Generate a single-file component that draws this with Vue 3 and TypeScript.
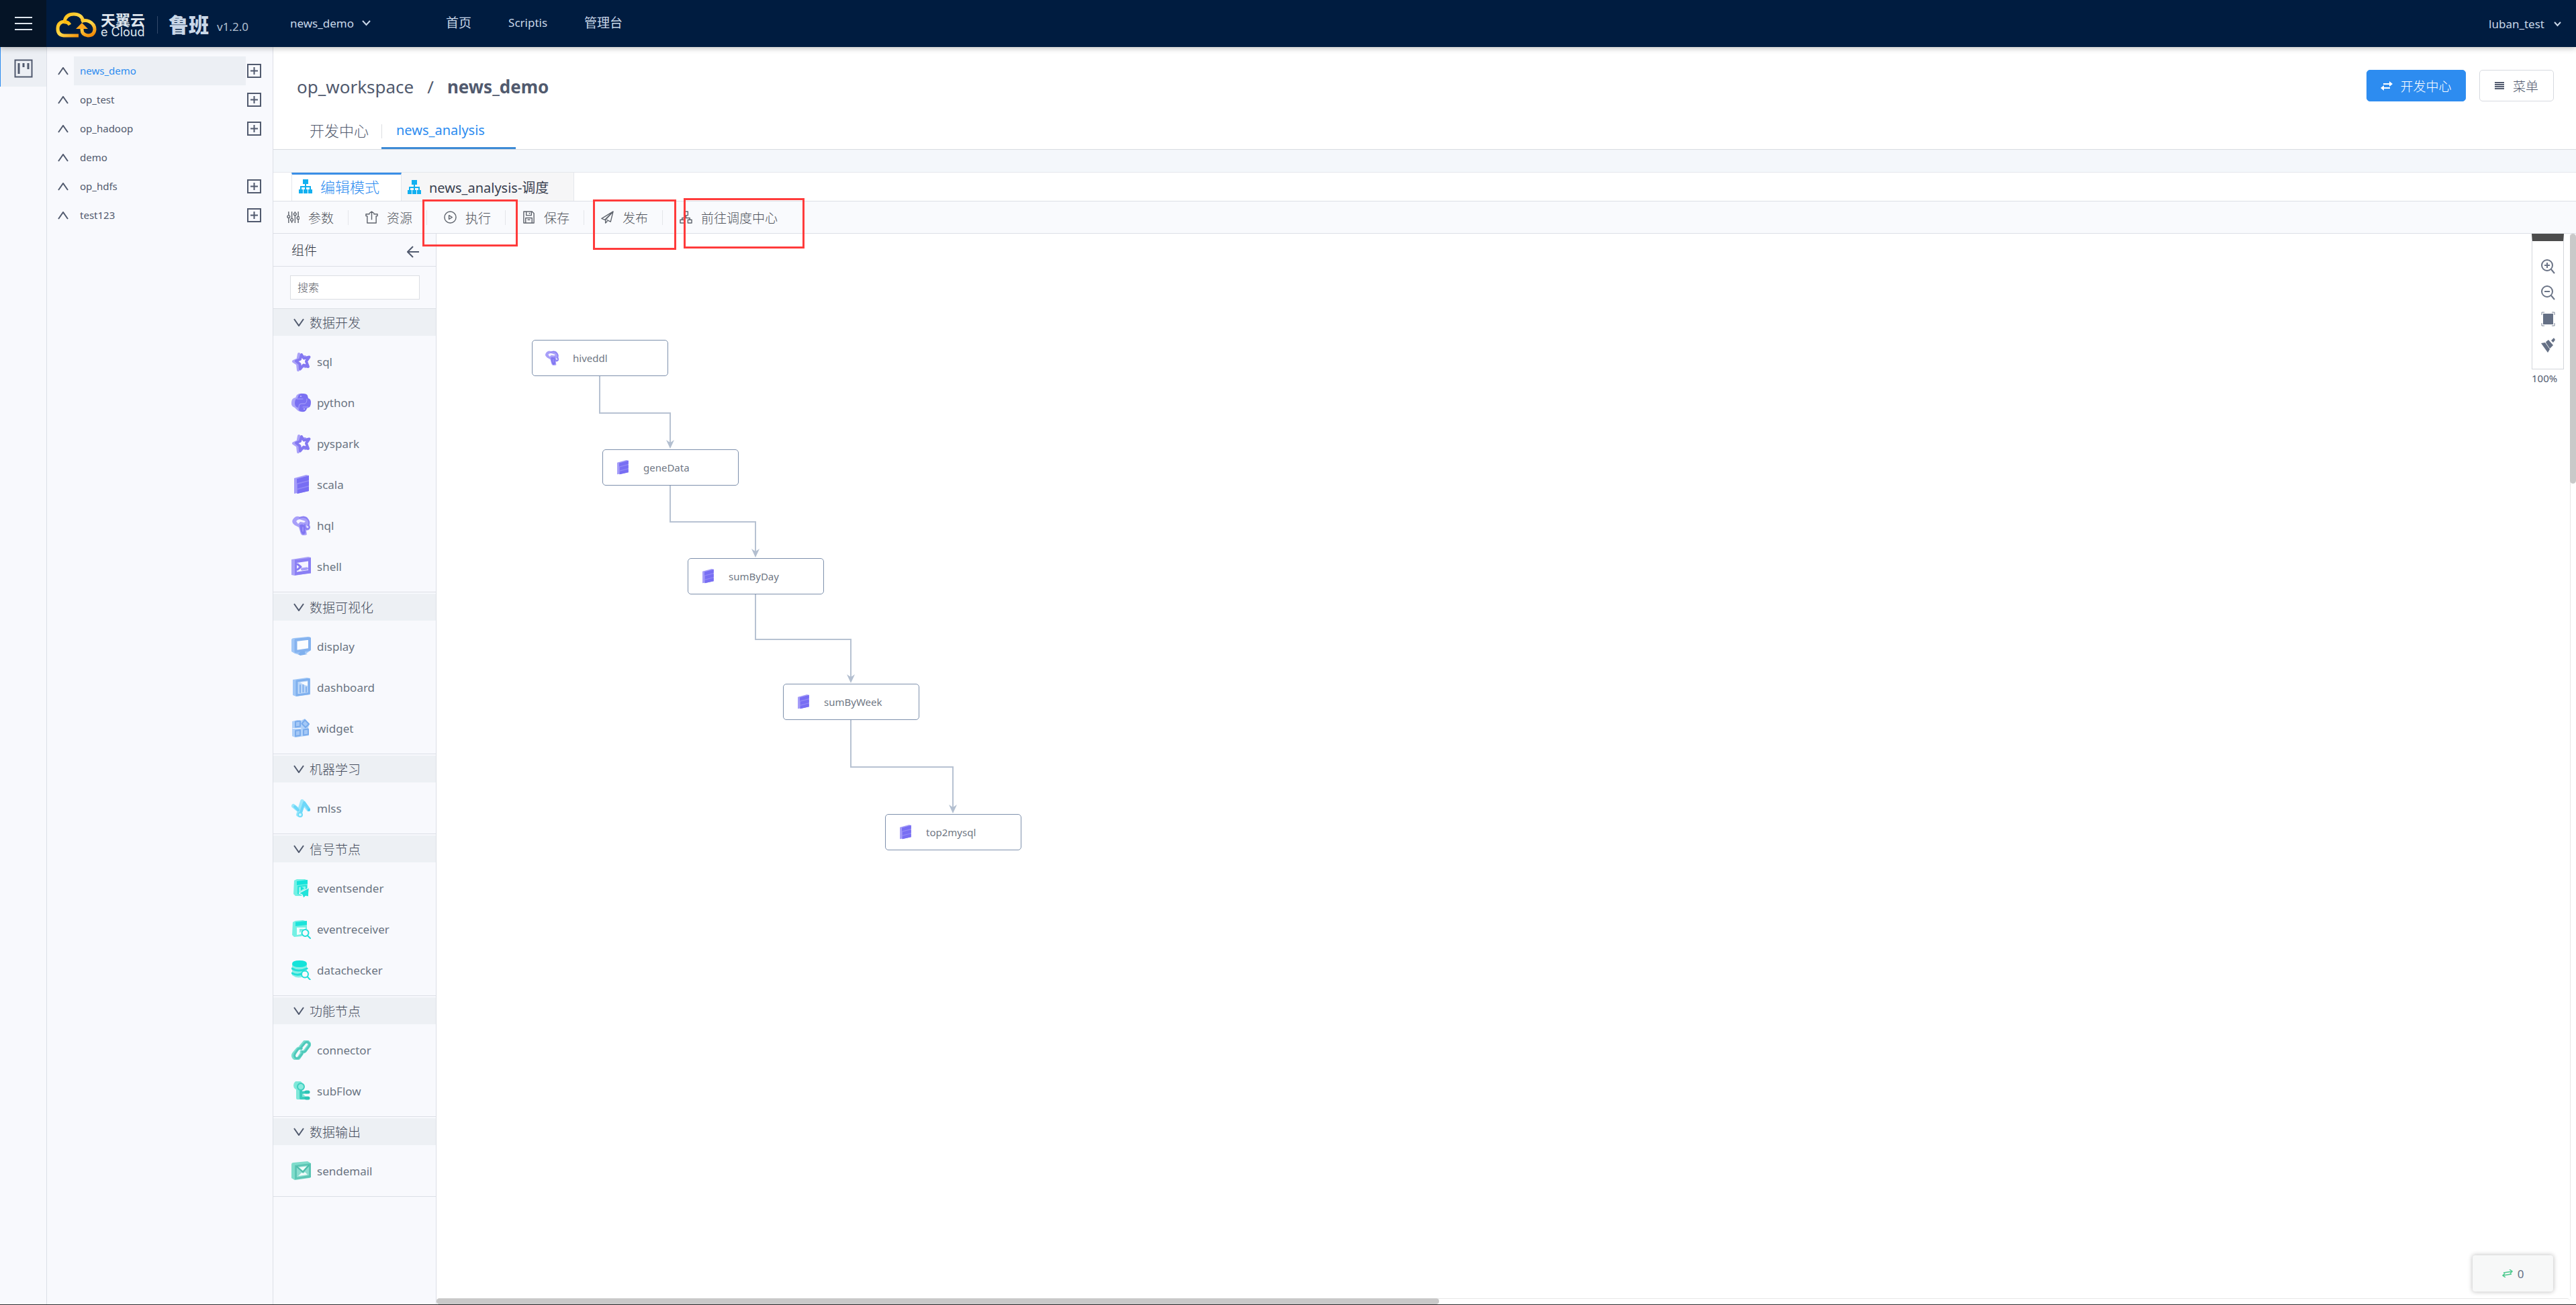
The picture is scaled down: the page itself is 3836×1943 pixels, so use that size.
<script setup lang="ts">
import { ref } from 'vue'

interface Shape {
  d: string
  fill?: string
  stroke?: string
  w?: number
}
interface Project {
  name: string
  canAdd: boolean
}
interface ComponentGroup {
  title: string
  items: string[]
}
interface FlowNode {
  name: string
  icon: string
  x: number
  y: number
}

const projects: Project[] = [
  { name: 'news_demo', canAdd: true },
  { name: 'op_test', canAdd: true },
  { name: 'op_hadoop', canAdd: true },
  { name: 'demo', canAdd: false },
  { name: 'op_hdfs', canAdd: true },
  { name: 'test123', canAdd: true },
]
const activeProject = ref('news_demo')
const keyword = ref('')

const groups: ComponentGroup[] = [
  { title: '数据开发', items: ['sql', 'python', 'pyspark', 'scala', 'hql', 'shell'] },
  { title: '数据可视化', items: ['display', 'dashboard', 'widget'] },
  { title: '机器学习', items: ['mlss'] },
  { title: '信号节点', items: ['eventsender', 'eventreceiver', 'datachecker'] },
  { title: '功能节点', items: ['connector', 'subFlow'] },
  { title: '数据输出', items: ['sendemail'] },
]

const star = 'M15 4 L18.500 9.500 L26.500 7.500 L22 14 L25 22 L18 19.500 L13 25.500 L12.500 18 L7 13.500 L13 11Z'
const starBack = 'M11 3 L14 9 L20 7 L18 14 L21 22 L14 20 L10 27 L9 18 L3 14 L9.500 11Z'
const starIcon: Shape[] = [
  { d: starBack, fill: '#aba2f8', stroke: '#aba2f8', w: 4 },
  { d: star, fill: '#fbfaff', stroke: '#8478f1', w: 4 },
]

const shapes: Record<string, Shape[]> = {
  sql: starIcon,
  pyspark: starIcon,
  python: [
    { d: 'M8 3 Q13 -1 20 2 L22 8 Q24 24 19 28 Q12 29 8 25 L5 22 Q-1 20 0 14 Q0 8 6 7Z', fill: '#aba4f9' },
    { d: 'M10 5 Q11 1 17 1 Q23 1 24 4 L25 8 Q29 9 29 14 Q29 21 25 22 L23 23 Q22 28 17 28 Q12 28 11 25 L10 22 Q5 21 5 15 Q5 9 9 8Z', fill: '#7a70f2' },
    { d: 'M8 9 H17 M11 23 V20 Q11 16 15 16 H20 Q23 15 23 9 M17 21 H25', stroke: '#aaa3fa', w: 1 },
    { d: 'M14 5 h0 M19 24 h0', stroke: '#c8c3fc', w: 2 },
  ],
  scala: [
    { d: 'M4 5 L22 0 L26 1 L9 6 V27 L4 28Z', fill: '#a49cf8' },
    { d: 'M8 6 L26 1 V24 L8 28Z', fill: '#958cf6' },
    { d: 'M8 6 L26 1 V8 L8 12.500Z M9 14 L26 9.500 V16 L9 20.500Z M9 22 L26 17.500 V24 L9 28Z', fill: '#786ef3' },
  ],
  hql: [
    { d: 'M4 3 Q8 -1 13 2 Q18 -1 23 2 Q28 7 26 12 Q30 17 26 21 L22 22 L23 28 Q17 31 14 27 L11 17 L5 14 Q-2 9 4 3Z', fill: '#a89ff9' },
    { d: 'M12 3 Q20 0 24 5 Q28 10 25 14 Q29 19 23 20 Q19 18 20 13', stroke: '#8b80f3', w: 2 },
    { d: 'M7 8 Q10 4 15 6 L21 8 L19 10 L13 9 L10 12Z', fill: '#f6f4ff' },
    { d: 'M22 14 L26 17 L23 18Z', fill: '#f0eeff' },
    { d: 'M12 14 Q17 11 20 15 L21 26 L17 28 L14 24Z', fill: '#8176f2' },
    { d: 'M17 17 v6', stroke: '#b5adfb', w: 1 },
  ],
  shell: [
    { d: 'M0 4 L25 0 L29 1 V24 L5 28 L0 27Z', fill: '#aaa2f8' },
    { d: 'M5 4.500 L29 1.500 V24.500 L5 27.500Z', fill: '#8a7ff4' },
    { d: 'M8 9 L25 6.500 V20 L8 22.500Z', fill: '#f5f4ff' },
    { d: 'M9 11 L14 15 L9 19', stroke: '#867bf3', w: 3 },
    { d: 'M16 18.500 L23 17.500', stroke: '#a59df8', w: 4 },
  ],
  display: [
    { d: 'M0 4 Q1 2 4 2 L25 0 L29 2 V20 L22 25 L12 27 L5 25 L0 22Z', fill: '#a0c7f7' },
    { d: 'M6.500 5 L27 2.500 V19 L6.500 22Z', fill: '#fbfdff', stroke: '#85b3ef', w: 4 },
    { d: 'M14 22 L20 21 V25 L24 26 L13 28 L10 26Z', fill: '#7fb0ee' },
  ],
  dashboard: [
    { d: 'M2 3 L23 0 L28 1 V25 L7 28 L2 26Z', fill: '#a0c7f7' },
    { d: 'M8 5 L26 2.500 V23.500 L8 26Z', fill: '#bcd7f8', stroke: '#7fb0ee', w: 3 },
    { d: 'M13 7 L24 5.500 V12 L20 11 L16 9Z', fill: '#f7fbff' },
    { d: 'M13 11 V22 M17.500 11 V21 M22 14 V21', stroke: '#7fb0ee', w: 2 },
  ],
  widget: [
    { d: 'M1 4 L9 2 L14 3 L20 0 L27 8 L25 13 L26 25 L6 28 L1 26Z', fill: '#b0d1f9' },
    { d: 'M6 4.500 L13 3.500 V11.500 L6 12.500Z M20 2 L26 8 L21 13 L15.500 7.500Z M6 18 L13 17 V25 L6 26Z M18 16.500 L25 15.500 V23.500 L18 24.500Z', fill: '#a4c8f6', stroke: '#79abec', w: 2 },
    { d: 'M2 14.500 H14', stroke: '#f8f9fd', w: 1 },
  ],
  mlss: [
    { d: 'M3 11 L9 16 M10 24 L16 4 L25 16', stroke: '#9ce7fb', w: 6 },
    { d: 'M5 12 L10 17 M13 24 L19 6 L26 16', stroke: '#6dd7f9', w: 4 },
    { d: 'M10 24 a3 3 0 1 0 6 0 a3 3 0 1 0 -6 0', fill: '#d9f6fe', stroke: '#71dcf9', w: 2 },
    { d: 'M24 17 a2 2 0 1 0 4 0 a2 2 0 1 0 -4 0', fill: '#4ecbf6' },
  ],
  eventsender: [
    { d: 'M4 3 L8 1 L20 1 L24 3 V14 L15 26 L6 26 L3 23Z', fill: '#73f0e4' },
    { d: 'M8 4 L24 2 V8 L8 10Z', fill: '#14e3da' },
    { d: 'M10 12 L22 10.500 V17 L16 22 L10 22.500Z', fill: '#8ff3ea', stroke: '#22e4da', w: 2 },
    { d: 'M14 12 L19 14.500 L14 18Z', fill: '#14e3da' },
    { d: 'M26 14 L11 22 L16 24 L18 29 L21 26 L25 27Z', fill: '#22e4da', stroke: '#f8f9fd', w: 1 },
  ],
  eventreceiver: [
    { d: 'M2 4 L6 2 L17 1 L23 3 V14 L15 25 L4 26 L1 23Z', fill: '#73f0e4' },
    { d: 'M6 4 L23 2 V8 L6 10Z', fill: '#1be3da' },
    { d: 'M8 12 H21 V15 L14 22 L8 23Z', fill: '#effefd' },
    { d: 'M12 14 h6 l-6 6z', fill: '#77eee4' },
    { d: 'M15.500 20 a5 5 0 1 0 10 0 a5 5 0 1 0 -10 0', fill: '#f8f9fd', stroke: '#22e0d8', w: 2 },
    { d: 'M24 24 L28 28', stroke: '#22e0d8', w: 2 },
  ],
  datachecker: [
    { d: 'M1 5 V22 Q9 28 17 24 L23 15 V5Z', fill: '#86efe6' },
    { d: 'M1 5 Q1 0 12 0 Q23 0 23 5 Q23 10 12 10 Q1 10 1 5Z', fill: '#14e3da' },
    { d: 'M1 12 Q10 18 23 12 M1 19 Q8 23 15 20', stroke: '#22e0d8', w: 3 },
    { d: 'M15 20.500 a5 5 0 1 0 10 0 a5 5 0 1 0 -10 0', fill: '#f8f9fd', stroke: '#22e0d8', w: 2 },
    { d: 'M24 24.500 L28 29', stroke: '#22e0d8', w: 2 },
  ],
  connector: [
    { d: 'M14 9 L19 3 Q22 0 25 3 Q28 5 26 8 L20 16 Q18 18 15 17 M14 12 Q11 11 9 13 L4 19 Q1 23 4 26 Q8 29 11 26 L15 20', stroke: '#78dfd0', w: 5 },
    { d: 'M15 10 L20 4 Q23 1 26 4 Q28 6 26 9 L21 16 Q19 18 16 17 M15 12 Q12 11 10 13 L6 19 Q3 23 6 26 Q9 28 12 25 L16 20', stroke: '#4fc8ba', w: 3 },
  ],
  subFlow: [
    { d: 'M5 6 a5 5 0 1 0 10 0 a5 5 0 1 0 -10 0 M9 12 V25 H24 M12 12 V25', fill: '#7fe8d9', stroke: '#7fe8d9', w: 4 },
    { d: 'M9 8 a5 5 0 1 0 10 0 a5 5 0 1 0 -10 0', fill: '#8cebdf', stroke: '#3fcfc0', w: 2 },
    { d: 'M14 14 V25 H24 M14 17 L24 16', stroke: '#3bcdbe', w: 4 },
    { d: 'M22 16 h3 M22 25 h3', stroke: '#2cc4b5', w: 5 },
  ],
  sendemail: [
    { d: 'M0 5 Q0 2 3 2 L24 0 L29 3 V22 Q29 25 26 25 L5 28 L0 25Z', fill: '#7fdccb' },
    { d: 'M5 6 L29 3 V24 L5 27Z', fill: '#5bc5b4' },
    { d: 'M8 8 L26 6 V21 L8 24Z', fill: '#8bdccf' },
    { d: 'M11 9 L23 7.500 L17 14Z M10 22 L15 17 L18 18 L20 16 L24 20Z', fill: '#f1fcfa' },
    { d: 'M8 8 L17 16 L26 6', stroke: '#4cbcaa', w: 2 },
  ],
}

const nodes: FlowNode[] = [
  { name: 'hiveddl', icon: 'hql', x: 142, y: 158 },
  { name: 'geneData', icon: 'scala', x: 247, y: 321 },
  { name: 'sumByDay', icon: 'scala', x: 374, y: 483 },
  { name: 'sumByWeek', icon: 'scala', x: 516, y: 670 },
  { name: 'top2mysql', icon: 'scala', x: 668, y: 864 },
]
const nodeWidth = 203
const nodeHeight = 54

const edges = nodes.slice(1).map((target, i) => {
  const source = nodes[i]
  const x1 = source.x + Math.floor(nodeWidth / 2)
  const x2 = target.x + Math.floor(nodeWidth / 2)
  const y1 = source.y + nodeHeight
  const mid = Math.round((y1 + target.y) / 2)
  const tip = target.y - 1
  return {
    line: `M${x1} ${y1} V${mid} H${x2} V${tip - 8}`,
    arrow: `M${x2} ${tip} L${x2 - 6} ${tip - 13} L${x2} ${tip - 9} L${x2 + 6} ${tip - 13}Z`,
  }
})

const tools = [
  { label: '参数', d: 'M3 1V7M3 11V19M8 1V12M8 16V19M13 1V3M13 7V19M18 1V9M18 13V19M1 9a2 2 0 1 0 4 0a2 2 0 1 0-4 0M6 14a2 2 0 1 0 4 0a2 2 0 1 0-4 0M11 5a2 2 0 1 0 4 0a2 2 0 1 0-4 0M16 11a2 2 0 1 0 4 0a2 2 0 1 0-4 0' },
  { label: '资源', d: 'M7 5H1V8H3V19H17V8H19V5H13M10 14V1M6 4L10 1L14 4' },
  { label: '执行', d: 'M1 10a9 9 0 1 0 18 0a9 9 0 1 0-18 0M8 7L13 10L8 13Z' },
  { label: '保存', d: 'M2 1H15L18 4V19H2ZM6 1V7H14V1M11 3V5M5 19V11H15V19M8 14H12' },
  { label: '发布', d: 'M19 1L1 12L6 14ZM19 1L15 17L9 14M19 1L7 14V19L10 16' },
  { label: '前往调度中心', d: 'M7 1H13V7H7ZM10 7V11M4 14V11H16V14M1 14H7V19H1ZM13 14H19V19H13Z' },
]
</script>

<template>
  <div class="app">
    <header class="topbar">
      <button class="burger" aria-label="menu">
        <svg width="26" height="22" viewBox="0 0 26 22"><path d="M0 2H26M0 11H26M0 20H26" stroke="#dfe6ee" stroke-width="2" /></svg>
      </button>
      <svg class="cloud" width="61" height="38" viewBox="0 0 61 38" fill="none">
        <defs>
          <linearGradient id="gold" x1="0" y1="0" x2="1" y2="1">
            <stop offset="0" stop-color="#ffb300" />
            <stop offset="0.5" stop-color="#ffd84a" />
            <stop offset="1" stop-color="#f08300" />
          </linearGradient>
        </defs>
        <path d="M34 35H12Q3 34 3 25Q3 15 13 14Q15 3 27 3Q38 3 41 13" stroke="url(#gold)" stroke-width="5" />
        <path d="M12 15Q18 14 21 19M38 14Q44 11 50 14Q58 18 58 26Q57 35 48 35Q39 34 39 26V22" stroke="url(#gold)" stroke-width="5" />
        <path d="M30 25L39 16L48 25Z" fill="#ffa81e" />
      </svg>
      <div class="brand">
        <span class="brand-cn">天翼云</span>
        <span class="brand-en">e Cloud</span>
      </div>
      <span class="brand-line"></span>
      <span class="product">鲁班</span>
      <span class="version">v1.2.0</span>
      <button class="workspace">
        news_demo
        <svg width="13" height="9" viewBox="0 0 13 9"><path d="M1 1L6.500 7L12 1" fill="none" stroke="currentColor" stroke-width="2" /></svg>
      </button>
      <nav class="topnav">
        <a href="#home" class="cn">首页</a>
        <a href="#scriptis">Scriptis</a>
        <a href="#admin" class="cn">管理台</a>
      </nav>
      <button class="user">
        luban_test
        <svg width="11" height="9" viewBox="0 0 11 9"><path d="M1 2L5.500 7L10 2" fill="none" stroke="currentColor" stroke-width="2" /></svg>
      </button>
    </header>

    <div class="body">
      <aside class="rail">
        <button class="rail-item" aria-label="projects">
          <svg width="28" height="28" viewBox="0 0 28 28" fill="none" stroke="#515a6e">
            <path d="M1.500 1.500H26.500V26.500H1.500Z" stroke-width="2" />
            <path d="M7 6V22M14 6V12M21 6V15" stroke-width="3" />
          </svg>
        </button>
      </aside>

      <aside class="projects">
        <div v-for="p in projects" :key="p.name" class="project">
          <svg class="caret" width="16" height="12" viewBox="0 0 16 12"><path d="M1 11L8 1L15 11" fill="none" stroke="#515a6e" stroke-width="2" /></svg>
          <a href="#project" class="project-name" :class="{ active: p.name === activeProject }" @click.prevent="activeProject = p.name">{{ p.name }}</a>
          <button v-if="p.canAdd" class="add" aria-label="add">
            <svg width="21" height="21" viewBox="0 0 21 21" fill="none" stroke="#515a6e"><path d="M1 1H20V20H1Z" stroke-width="2" /><path d="M5 10.500H16M10.500 5V16" stroke-width="2" /></svg>
          </button>
        </div>
      </aside>

      <main class="main">
        <section class="page-head">
          <div class="title-row">
            <h1 class="title">op_workspace<span class="slash">/</span><b>news_demo</b></h1>
            <div class="actions">
              <button class="btn primary">
                <svg width="18" height="14" viewBox="0 0 18 14" fill="currentColor"><path d="M4 3H13V0L18 4L13 8V5H4ZM14 9H5V6L0 10L5 14V11H14Z" /></svg>
                开发中心
              </button>
              <button class="btn">
                <svg width="14" height="12" viewBox="0 0 14 12" stroke="currentColor" stroke-width="2"><path d="M0 1H14M0 4H14M0 7H14M0 10H14" /></svg>
                菜单
              </button>
            </div>
          </div>
          <nav class="tabs">
            <a href="#dev" class="tab">开发中心</a>
            <a href="#analysis" class="tab on">news_analysis</a>
          </nav>
        </section>
        <div class="band"></div>

        <nav class="modes">
          <a v-for="(m, i) in ['编辑模式', 'news_analysis-调度']" :key="m" href="#mode" class="mode" :class="i === 0 ? 'edit' : 'schedule'">
            <svg width="20" height="21" viewBox="0 0 20 21" fill="#12b0f0"><path d="M6 0H14V7H6ZM9 7H11V10H18V15H16V12H11V15H9V12H4V15H2V10H9ZM0 15H6V21H0ZM7 15H13V21H7ZM14 15H20V21H14Z" /></svg>
            <span>{{ m }}</span>
          </a>
        </nav>

        <div class="toolbar">
          <button v-for="t in tools" :key="t.label" class="tool">
            <svg width="19" height="19" viewBox="0 0 20 20"><path :d="t.d" fill="none" stroke="#5f646d" stroke-width="1.500" stroke-linejoin="round" /></svg>
            <span>{{ t.label }}</span>
          </button>
          <i class="mark run"></i>
          <i class="mark publish"></i>
          <i class="mark goto"></i>
        </div>

        <div class="workbench">
          <aside class="components">
            <div class="comp-head">
              <span>组件</span>
              <button class="collapse" aria-label="collapse">
                <svg width="18" height="18" viewBox="0 0 18 18"><path d="M18 9H1M9 1L1 9L9 17" fill="none" stroke="#515a6e" stroke-width="2" /></svg>
              </button>
            </div>
            <div class="search">
              <input v-model="keyword" type="text" placeholder="搜索" aria-label="搜索" />
            </div>
            <section v-for="g in groups" :key="g.title" class="group">
              <button class="group-head">
                <svg width="16" height="12" viewBox="0 0 16 12"><path d="M1 1L8 11L15 1" fill="none" stroke="#515a6e" stroke-width="2" /></svg>
                {{ g.title }}
              </button>
              <ul class="group-list">
                <li v-for="name in g.items" :key="name" draggable="true">
                  <svg width="29" height="29" viewBox="0 0 29 29">
                    <path v-for="(s, i) in shapes[name]" :key="i" :d="s.d" :fill="s.fill ?? 'none'" :stroke="s.stroke ?? 'none'" :stroke-width="s.w ?? 0" stroke-linejoin="round" stroke-linecap="round" />
                  </svg>
                  {{ name }}
                </li>
              </ul>
            </section>
          </aside>

          <section class="canvas">
            <svg class="edges" width="100%" height="100%">
              <g v-for="(e, i) in edges" :key="i">
                <path :d="e.line" fill="none" stroke="#b7c2d2" stroke-width="2" />
                <path :d="e.arrow" fill="#b3bfd0" />
              </g>
            </svg>
            <div v-for="n in nodes" :key="n.name" class="node" :style="{ left: n.x + 'px', top: n.y + 'px' }">
              <svg width="22" height="22" viewBox="0 0 29 29">
                <path v-for="(s, i) in shapes[n.icon]" :key="i" :d="s.d" :fill="s.fill ?? 'none'" :stroke="s.stroke ?? 'none'" :stroke-width="s.w ?? 0" stroke-linejoin="round" stroke-linecap="round" />
              </svg>
              <span>{{ n.name }}</span>
            </div>

            <div class="zoom">
              <div class="zoom-box">
                <button aria-label="zoom in">
                  <svg width="21" height="22" viewBox="0 0 21 22" fill="none" stroke="#6b7486" stroke-width="2"><circle cx="9" cy="9" r="8" /><path d="M15 15L20 21M5 9H13M9 5V13" /></svg>
                </button>
                <button aria-label="zoom out">
                  <svg width="21" height="22" viewBox="0 0 21 22" fill="none" stroke="#6b7486" stroke-width="2"><circle cx="9" cy="9" r="8" /><path d="M15 15L20 21M5 9H13" /></svg>
                </button>
                <button aria-label="fit">
                  <svg width="21" height="22" viewBox="0 0 21 22"><path d="M3 3H18V19H3Z" fill="#657085" /><path d="M1 5V1H5M16 1H20V5M20 17V21H16M5 21H1V17" fill="none" stroke="#7a8495" stroke-width="1" /></svg>
                </button>
                <button aria-label="format">
                  <svg width="21" height="22" viewBox="0 0 21 22" fill="#657085"><path d="M0 8L6 7L13 17L10 22ZM7 6L11 3L18 11L14 15ZM8 7L14 15L13 16L7 7ZM15 4L19 0L21 3L18 7Z" /></svg>
                </button>
              </div>
              <span class="percent">100%</span>
            </div>

            <button class="jobs">
              <svg width="16" height="12" viewBox="0 0 16 12"><path d="M2 5L15 3M11 0L15 3L12 6M14 7L1 9M5 12L1 9L4 6" fill="none" stroke="#4bc98d" stroke-width="1.500" /></svg>
              0
            </button>
            <div class="vbar"><i></i></div>
            <div class="hbar"><i></i></div>
          </section>
        </div>
      </main>
    </div>
  </div>
</template>

<style>
body {
  margin: 0;
}
</style>

<style scoped>
.app {
  min-height: 100vh;
  display: flex;
  flex-direction: column;
  box-sizing: border-box;
  border-bottom: 1px solid #2b2b2d;
  background: #fff;
  color: #515a6e;
  font-family: "Noto Sans", "Noto Sans CJK SC", sans-serif;
  font-size: 17px;
}
svg {
  display: block;
  flex: none;
}
button {
  margin: 0;
  padding: 0;
  border: 0;
  background: none;
  color: inherit;
  font: inherit;
  cursor: pointer;
}
a {
  color: inherit;
  text-decoration: none;
}
.topbar {
  position: relative;
  z-index: 2;
  display: flex;
  align-items: center;
  height: 70px;
  background: #001c40;
  color: #c9d7e8;
  box-shadow: 0 2px 8px rgba(0, 0, 0, 0.25);
}
.burger {
  display: flex;
  align-items: center;
  justify-content: center;
  align-self: stretch;
  width: 69px;
  background: #051426;
}
.cloud {
  margin-left: 14px;
  margin-top: 4px;
}
.brand {
  display: flex;
  flex-direction: column;
  width: 84px;
  margin-left: 6px;
  margin-top: 6px;
  color: #dfe6ee;
}
.brand-cn {
  font-size: 22px;
  font-weight: 700;
  line-height: 20px;
}
.brand-en {
  font-family: Inter, sans-serif;
  font-size: 18px;
  line-height: 18px;
}
.brand-line {
  width: 1px;
  height: 26px;
  margin-top: 4px;
  background: #33496a;
}
.product {
  width: 72px;
  margin-left: 16px;
  margin-top: 4px;
  font-size: 30px;
  font-weight: 900;
  line-height: 56px;
}
.version {
  width: 109px;
  margin-top: 9px;
  color: #b3c0d1;
}
.workspace {
  display: flex;
  align-items: center;
  gap: 12px;
  height: 68px;
  align-self: flex-start;
}
.topnav {
  display: flex;
  flex: 1;
  align-self: flex-start;
  gap: 55px;
  margin-left: 112px;
  line-height: 68px;
}
.topnav .cn {
  font-size: 19px;
}
.user {
  display: flex;
  align-items: center;
  gap: 14px;
  height: 70px;
  padding-right: 22px;
}
.body {
  display: flex;
  flex: 1;
}
.rail {
  width: 69px;
  border-right: 1px solid #dcdfe6;
  background: #f8f9fd;
}
.rail-item {
  display: flex;
  align-items: center;
  justify-content: center;
  box-sizing: border-box;
  width: 69px;
  height: 59px;
  padding-top: 4px;
  border-left: 1px solid #2d8cf0;
  background: #eceff4;
}
.projects {
  box-sizing: border-box;
  width: 337px;
  padding: 14px 16px 0;
  border-right: 1px solid #dcdfe6;
  background: #f8f9fd;
}
.project {
  display: flex;
  align-items: center;
  height: 43px;
  font-size: 15px;
}
.caret {
  margin-right: 8px;
}
.project-name {
  width: 247px;
  padding-left: 9px;
  line-height: 43px;
}
.project-name.active {
  background: #eceff4;
  color: #2d8cf0;
}
.add {
  margin-left: 2px;
}
.main {
  display: flex;
  flex: 1;
  flex-direction: column;
  min-width: 0;
}
.page-head {
  padding: 34px 33px 0 35px;
  border-bottom: 1px solid #d9dce1;
}
.title-row {
  display: flex;
  justify-content: space-between;
}
.title {
  margin: 0;
  font-size: 26px;
  font-weight: 400;
  line-height: 50px;
}
.slash {
  margin: 0 20px;
}
.actions {
  display: flex;
  gap: 20px;
}
.btn {
  display: flex;
  align-items: center;
  justify-content: center;
  gap: 13px;
  box-sizing: border-box;
  width: 111px;
  height: 47px;
  border: 1px solid #d7dae0;
  border-radius: 5px;
  background: #fff;
  font-size: 19px;
  font-weight: 300;
}
.btn.primary {
  gap: 11px;
  width: 148px;
  border-color: #2d8cf0;
  background: #2d8cf0;
  color: #fff;
}
.tabs {
  display: flex;
  align-items: flex-start;
  margin-top: 17px;
}
.tab {
  width: 107px;
  padding-left: 19px;
  font-size: 22px;
  font-weight: 300;
  line-height: 46px;
}
.tab.on {
  box-sizing: border-box;
  width: 200px;
  height: 51px;
  padding-left: 22px;
  border-bottom: 3px solid #3d8bd6;
  background: linear-gradient(#dcdee2, #dcdee2) 0 14px / 1px 21px no-repeat;
  color: #2d8cf0;
  font-size: 20px;
  font-weight: 400;
}
.band {
  height: 33px;
  border-bottom: 1px solid #e4e7ec;
  background: #f4f7fb;
}
.modes {
  display: flex;
  height: 42px;
  padding-left: 27px;
  border-bottom: 1px solid #dcdfe6;
}
.mode {
  display: flex;
  align-items: center;
  box-sizing: border-box;
  gap: 12px;
  border-right: 1px solid #e4e7ec;
}
.mode.edit {
  width: 164px;
  padding: 0 0 5px 10px;
  border-top: 3px solid #3a8ee6;
  border-left: 1px solid #e4e7ec;
  color: #2d8cf0;
  font-size: 22px;
  font-weight: 300;
}
.mode.schedule {
  width: 257px;
  padding: 1px 0 0 9px;
  background: #f6f6f7;
  color: #39404f;
  font-size: 20px;
}
.toolbar {
  position: relative;
  display: flex;
  align-items: center;
  height: 47px;
  padding-left: 1px;
  border-bottom: 1px solid #dcdfe6;
  background: #f9fafd;
}
.tool {
  display: flex;
  align-items: center;
  box-sizing: border-box;
  gap: 13px;
  width: 117px;
  height: 22px;
  padding-left: 25px;
  border-right: 1px solid #e4e6ea;
  color: #50545c;
  font-size: 19px;
  font-weight: 300;
  white-space: nowrap;
}
.tool:first-child {
  width: 111px;
  padding-left: 19px;
}
.tool:nth-child(6) {
  width: 190px;
  border-right: 0;
}
.mark {
  position: absolute;
  box-sizing: border-box;
  border: 3px solid #ff3b3b;
  pointer-events: none;
  z-index: 1;
}
.mark.run {
  left: 222px;
  top: -3px;
  width: 142px;
  height: 70px;
}
.mark.publish {
  left: 476px;
  top: -3px;
  width: 124px;
  height: 75px;
}
.mark.goto {
  left: 611px;
  top: -5px;
  width: 180px;
  height: 75px;
}
.workbench {
  display: flex;
  flex: 1;
}
.components {
  box-sizing: border-box;
  width: 243px;
  border-right: 1px solid #dcdfe6;
  background: #f8f9fd;
}
.comp-head {
  display: flex;
  align-items: center;
  justify-content: space-between;
  height: 48px;
  padding: 0 25px 0 27px;
  border-bottom: 1px solid #dcdfe6;
  color: #30353f;
  font-size: 19px;
  font-weight: 300;
}
.collapse {
  margin-top: 6px;
}
.search {
  padding: 13px 24px 13px 25px;
  border-bottom: 1px solid #dcdfe6;
}
.search input {
  display: block;
  box-sizing: border-box;
  width: 100%;
  height: 36px;
  padding: 0 10px;
  border: 1px solid #dcdee2;
  background: #fff;
  font-family: inherit;
  font-size: 16px;
  font-weight: 300;
}
.search input::placeholder {
  color: #5f636b;
}
.group {
  margin-bottom: 2px;
  border-bottom: 1px solid #dcdfe6;
}
.group-head {
  display: flex;
  align-items: center;
  gap: 8px;
  width: 100%;
  height: 40px;
  padding-left: 30px;
  background: #edf0f4;
  color: #434a5a;
  font-size: 19px;
  font-weight: 300;
}
.group-list {
  margin: 0;
  padding: 8px 0 7px;
  list-style: none;
}
.group-list li {
  display: flex;
  align-items: center;
  gap: 9px;
  height: 61px;
  padding-left: 27px;
  color: #6a7482;
}
.canvas {
  position: relative;
  flex: 1;
  min-width: 0;
  background: #fff;
}
.edges {
  position: absolute;
  inset: 0;
}
.node {
  position: absolute;
  display: flex;
  align-items: center;
  box-sizing: border-box;
  gap: 20px;
  width: 203px;
  height: 54px;
  padding-left: 18px;
  border: 1px solid #7d90ac;
  border-radius: 5px;
  background: #fff;
  color: #6f7784;
  font-size: 15px;
}
.zoom {
  position: absolute;
  top: 0;
  right: 18px;
  width: 48px;
}
.zoom-box {
  display: flex;
  flex-direction: column;
  align-items: center;
  gap: 17px;
  box-sizing: border-box;
  height: 202px;
  padding-top: 27px;
  border: 1px solid #d3d6db;
  border-top: 11px solid #4c4c4c;
}
.percent {
  display: block;
  font-size: 15px;
  line-height: 26px;
}
.jobs {
  position: absolute;
  right: 34px;
  bottom: 19px;
  display: flex;
  align-items: center;
  justify-content: center;
  gap: 7px;
  width: 120px;
  height: 54px;
  border-radius: 4px;
  background: #f7f8f8;
  box-shadow: 0 0 6px 1px rgba(0, 0, 0, 0.22);
  color: #657085;
}
.vbar {
  position: absolute;
  top: 0;
  right: 0;
  bottom: 10px;
  box-sizing: border-box;
  width: 9px;
  border-left: 1px solid #e6e6e6;
  border-radius: 5px;
}
.vbar i {
  display: block;
  width: 9px;
  height: 372px;
  margin-left: -1px;
  border-radius: 5px;
  background: #c9c9c9;
}
.hbar {
  position: absolute;
  right: 9px;
  bottom: 0;
  left: 0;
  box-sizing: border-box;
  height: 9px;
  border-top: 1px solid #e6e6e6;
  border-radius: 5px;
}
.hbar i {
  display: block;
  width: 47%;
  height: 9px;
  margin-top: -1px;
  border-radius: 5px;
  background: #c9c9c9;
}
</style>
